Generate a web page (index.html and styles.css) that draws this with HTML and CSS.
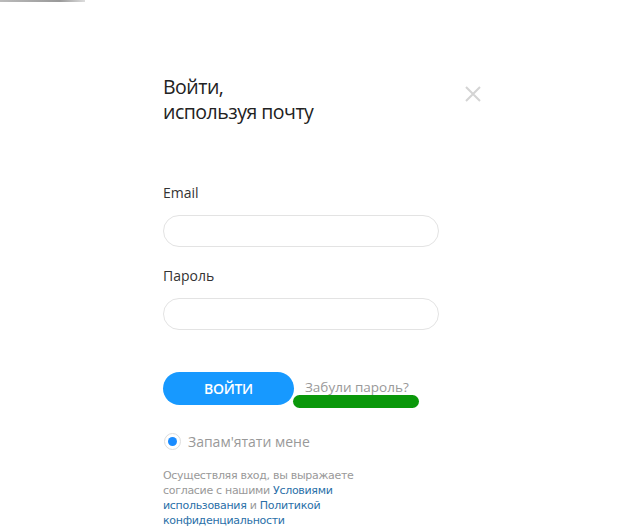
FILE: index.html
```html
<!DOCTYPE html>
<html lang="uk">
<head>
  <meta charset="UTF-8">
  <meta name="viewport" content="width=device-width, initial-scale=1.0">
  <title>Войти</title>
  <link rel="stylesheet" href="styles.css">
</head>
<body>
  <div class="top-line"></div>
  <div class="modal">
    <div class="modal-head">
      <h1>Войти,<br>используя почту</h1>
      <button class="close" aria-label="Закрыть">
        <svg width="16" height="16" viewBox="0 0 16 16">
          <path d="M1 1L15 15M15 1L1 15" stroke="#d4d4d4" stroke-width="2" fill="none"/>
        </svg>
      </button>
    </div>

    <form class="login-form">
      <div class="input-group">
        <label for="email">Email</label>
        <input type="text" id="email">
      </div>
      <div class="input-group">
        <label for="password">Пароль</label>
        <input type="password" id="password">
      </div>

      <div class="actions">
        <button type="submit" class="btn-login">ВОЙТИ</button>
        <a href="#" class="forgot">Забули пароль?<span class="mark"></span></a>
      </div>

      <label class="remember">
        <span class="radio"><span class="dot"></span></span>
        Запам'ятати мене
      </label>

      <p class="terms">
        Осуществляя вход, вы выражаете<br>
        согласие с нашими <a href="#">Условиями<br>использования</a> и <a href="#">Политикой<br>конфиденциальности</a>
      </p>
    </form>
  </div>
</body>
</html>
```

FILE: styles.css
```css
body {
  margin: 0;
  background: #fff;
  font-family: "Open Sans", Arial, sans-serif;
  color: #333;
}

.top-line {
  width: 85px;
  height: 2px;
  background: linear-gradient(to right, #bbb, #999 70%, #ddd);
}

.modal {
  width: 318px;
  margin-left: 163px;
  padding-top: 72px;
}

.modal-head {
  display: flex;
  justify-content: space-between;
  align-items: flex-start;
}

h1 {
  margin: 0;
  font-size: 19.5px;
  line-height: 25px;
  letter-spacing: -0.5px;
  font-weight: normal;
  color: #222;
}

.close {
  border: none;
  background: none;
  padding: 0;
  margin-top: 12px;
  width: 16px;
  height: 16px;
  cursor: pointer;
}

.close svg {
  display: block;
}

.login-form {
  width: 276px;
  margin-top: 60px;
}

.input-group {
  margin-bottom: 20px;
}

.input-group label {
  display: block;
  font-size: 14px;
  line-height: 18px;
  margin-bottom: 13px;
  color: #333;
}

.input-group input {
  display: block;
  box-sizing: border-box;
  width: 276px;
  height: 32px;
  border: 1px solid #e3e3e3;
  border-radius: 16px;
  padding: 0 14px;
  outline: none;
}

.actions {
  display: flex;
  align-items: center;
  margin-top: 42px;
}

.btn-login {
  width: 131px;
  height: 33px;
  border: none;
  border-radius: 17px;
  background: #1799ff;
  color: #fff;
  font-family: "Open Sans", Arial, sans-serif;
  font-size: 14px;
  letter-spacing: -0.3px;
  font-weight: 600;
  cursor: pointer;
}

.forgot {
  position: relative;
  margin-left: 11px;
  margin-top: -4px;
  font-size: 13.5px;
  color: #999;
  text-decoration: none;
}

.forgot .mark {
  position: absolute;
  left: -12px;
  top: 17px;
  width: 126px;
  height: 13px;
  border-radius: 7px;
  background: #0a980a;
}

.remember {
  display: flex;
  align-items: center;
  gap: 7px;
  margin-top: 27px;
  font-size: 14px;
  color: #999;
}

.radio {
  box-sizing: border-box;
  width: 17px;
  height: 17px;
  border: 1px solid #ddd;
  border-radius: 50%;
  display: flex;
  align-items: center;
  justify-content: center;
  margin-left: 1px;
}

.dot {
  width: 9px;
  height: 9px;
  border-radius: 50%;
  background: #1a8cff;
}

.terms {
  margin: 17px 0 0;
  font-family: "DejaVu Sans", Verdana, sans-serif;
  font-size: 11px;
  line-height: 15px;
  letter-spacing: -0.3px;
  color: #999;
}

.terms a {
  color: #2a6fa8;
  text-decoration: none;
}
```
